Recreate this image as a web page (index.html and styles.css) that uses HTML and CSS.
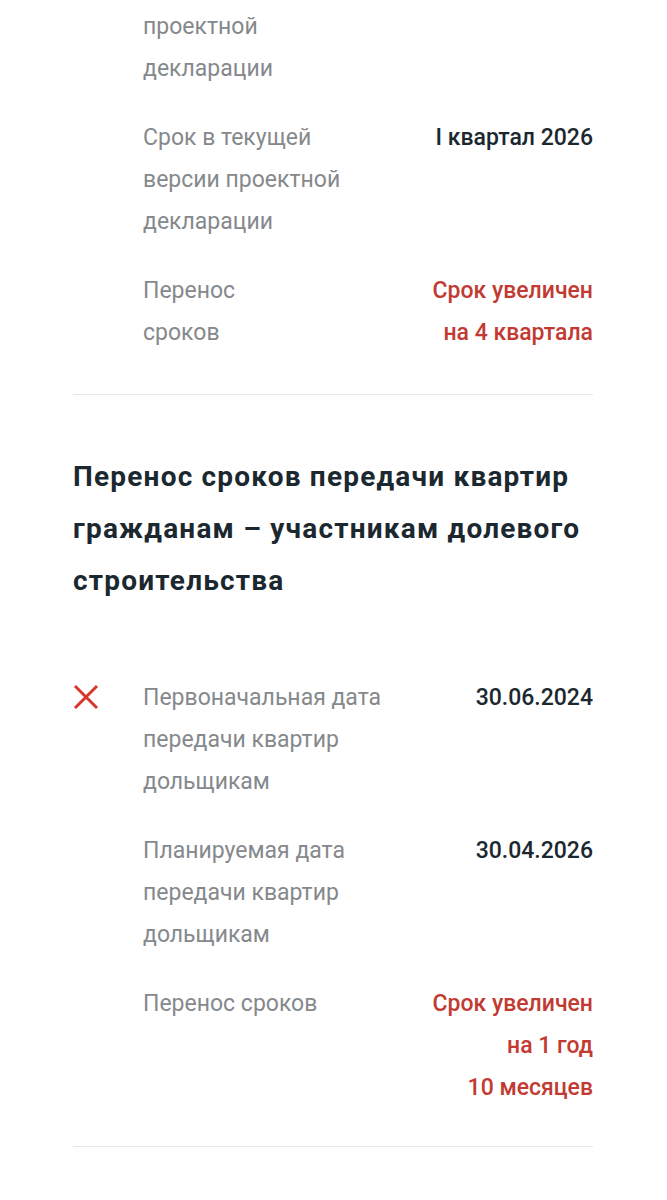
FILE: index.html
```html
<!DOCTYPE html>
<html lang="ru">
<head>
<meta charset="utf-8">
<link rel="stylesheet" href="styles.css">
</head>
<body>
<div class="page">
  <section class="block block-top">
    <div class="row">
      <div class="icon"></div>
      <div class="label">проектной<br>декларации</div>
      <div class="value"></div>
    </div>
    <div class="row">
      <div class="icon"></div>
      <div class="label">Срок в текущей<br>версии проектной<br>декларации</div>
      <div class="value">I квартал 2026</div>
    </div>
    <div class="row">
      <div class="icon"></div>
      <div class="label">Перенос<br>сроков</div>
      <div class="value red">Срок увеличен<br>на 4 квартала</div>
    </div>
  </section>
  <section class="block block-bottom">
    <h2 class="title">Перенос сроков передачи квартир гражданам – участникам долевого строительства</h2>
    <div class="rows">
      <div class="row">
        <div class="icon">
          <svg width="26" height="26" viewBox="0 0 26 26"><path d="M2 2 L24 24 M24 2 L2 24" stroke="#d9362b" stroke-width="3" fill="none"/></svg>
        </div>
        <div class="label">Первоначальная дата<br>передачи квартир<br>дольщикам</div>
        <div class="value">30.06.2024</div>
      </div>
      <div class="row">
        <div class="icon"></div>
        <div class="label">Планируемая дата<br>передачи квартир<br>дольщикам</div>
        <div class="value">30.04.2026</div>
      </div>
      <div class="row">
        <div class="icon"></div>
        <div class="label">Перенос сроков</div>
        <div class="value red">Срок увеличен<br>на 1 год<br>10 месяцев</div>
      </div>
    </div>
  </section>
</div>
</body>
</html>
```
FILE: styles.css
```css
html, body {
  margin: 0;
  padding: 0;
  background: #ffffff;
}
body {
  font-family: Roboto, "Noto Sans", sans-serif;
}
.page {
  width: 520px;
  margin-left: 73px;
}
.block {
  border-bottom: 1px solid #e6e6e6;
}
.block-top {
  padding-top: 6px;
  padding-bottom: 40px;
  display: flex;
  flex-direction: column;
  gap: 27px;
}
.block-bottom {
  padding-bottom: 37px;
}
.rows {
  display: flex;
  flex-direction: column;
  gap: 27px;
}
.title {
  margin: 56px 0 70px;
  font-size: 28px;
  line-height: 52px;
  font-weight: 700;
  letter-spacing: 1.2px;
  color: #1c2830;
}
.row {
  display: grid;
  grid-template-columns: 70px 1fr auto;
  font-size: 23px;
  line-height: 42px;
}
.icon {
  padding-top: 7px;
}
.icon svg {
  display: block;
}
.label {
  color: #85898c;
  font-weight: 400;
}
.value {
  text-align: right;
  color: #1c2830;
  font-weight: 500;
}
.value.red {
  color: #c23a32;
}
```
